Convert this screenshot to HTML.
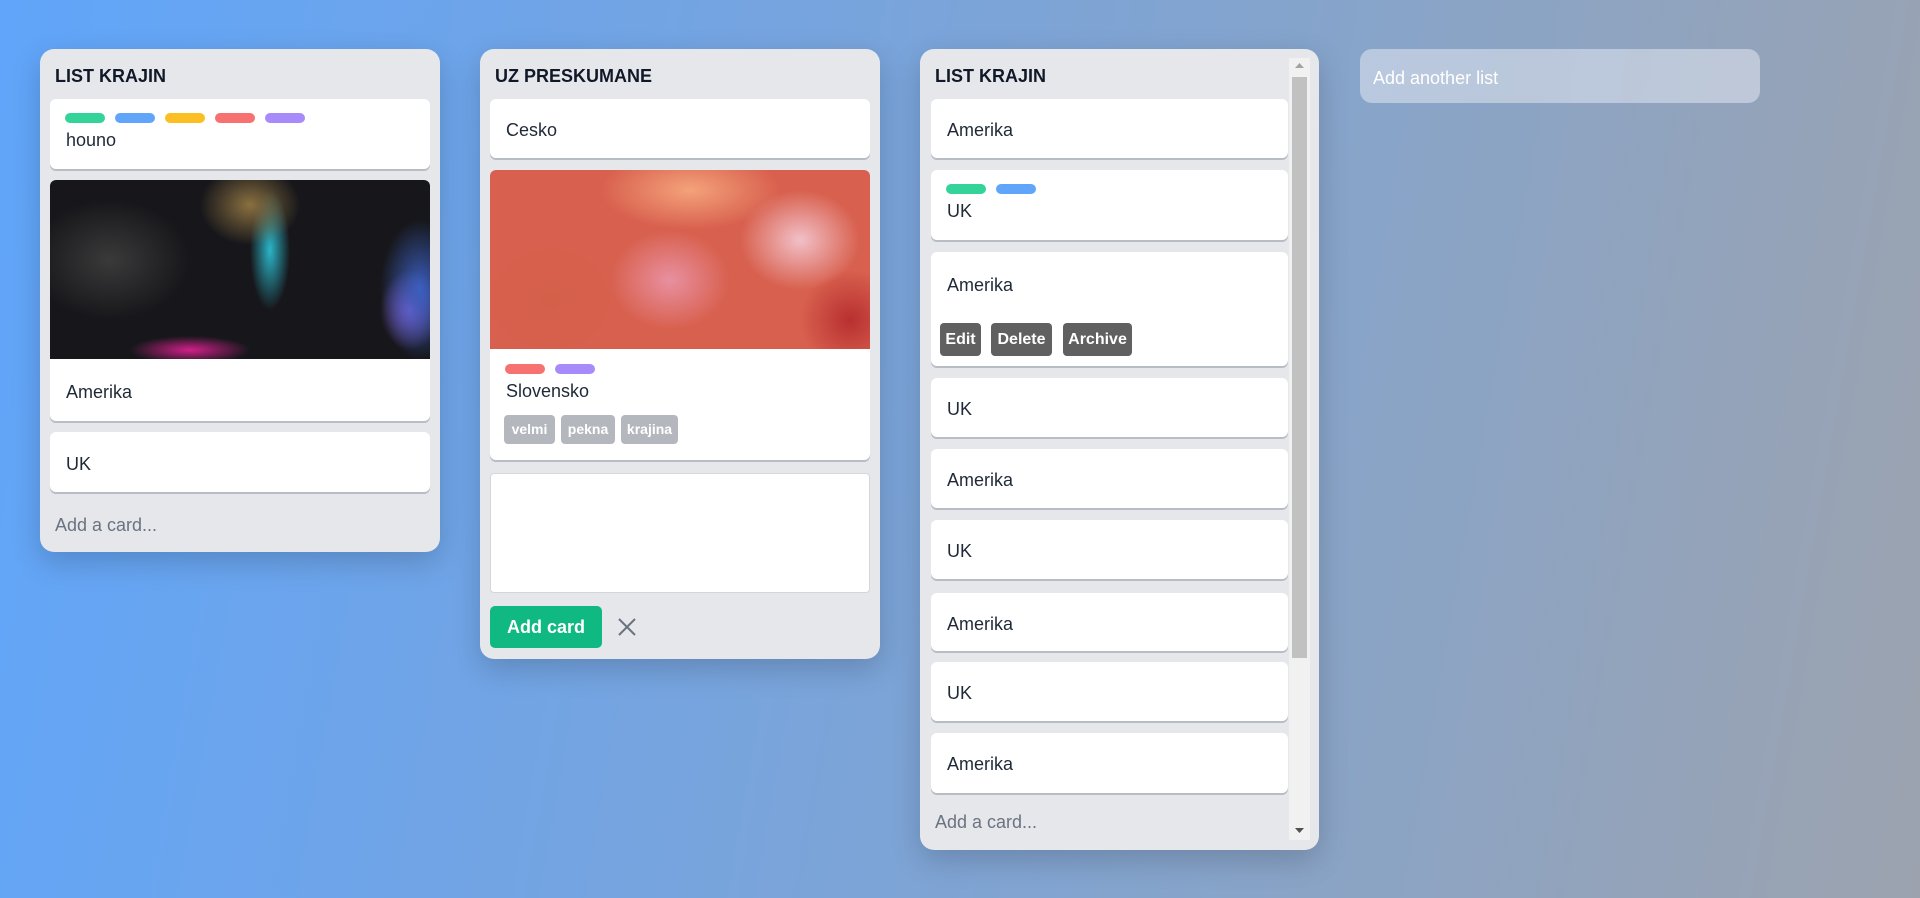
<!DOCTYPE html>
<html><head><meta charset="utf-8"><style>
*{box-sizing:border-box;margin:0;padding:0}
body{width:1920px;height:898px;overflow:hidden;position:relative;font-family:"Liberation Sans",sans-serif;background:linear-gradient(100deg,#60a5fa 0%,#7aa4da 45%,#9ca3af 100%);}
.list{position:absolute;background:#e5e7eb;border-radius:14px;box-shadow:0 10px 30px rgba(0,0,0,.18)}
.h{position:absolute;left:15px;top:17px;font-weight:bold;font-size:18px;color:#111827}
.card{position:absolute;background:#fff;border-radius:6px;box-shadow:0 2px 0 #b8bcc4;overflow:hidden}
.t{position:absolute;left:16px;font-size:18px;color:#1f2937;margin-top:1px}
.lb{position:absolute;height:10px;width:40px;border-radius:5px}
.add{position:absolute;left:15px;font-size:18px;color:#6b7280;margin-top:1px}
.tag{position:absolute;height:29px;background:#b4b8be;color:#fff;font-size:14px;font-weight:bold;border-radius:4px;text-align:center;line-height:29px}
.btn{position:absolute;height:33px;background:#606060;color:#fff;font-weight:bold;font-size:16px;border-radius:4px;text-align:center;line-height:33px}
</style></head><body>

<div class="list" style="left:40px;top:49px;width:400px;height:503px">
<div class="h">LIST KRAJIN</div>
<div class="card" style="left:10px;top:50px;width:380px;height:70px">
 <div class="lb" style="left:15px;top:14px;background:#34d399"></div>
 <div class="lb" style="left:65px;top:14px;background:#60a5fa"></div>
 <div class="lb" style="left:115px;top:14px;background:#fbbf24"></div>
 <div class="lb" style="left:165px;top:14px;background:#f87171"></div>
 <div class="lb" style="left:215px;top:14px;background:#a78bfa"></div>
 <div class="t" style="top:30px">houno</div>
</div>
<div class="card" style="left:10px;top:131px;width:380px;height:241px">
 <div style="position:absolute;left:0;top:0;width:380px;height:179px;background:
 radial-gradient(ellipse 40px 70px at 370px 110px,#3b5fc0 0%,transparent 100%),
 radial-gradient(ellipse 30px 40px at 360px 130px,#8a5cd0 0%,transparent 100%),
 radial-gradient(ellipse 60px 14px at 140px 170px,#d0208a 0%,transparent 100%),
 radial-gradient(ellipse 50px 40px at 200px 25px,#8a7040 0%,transparent 100%),
 radial-gradient(ellipse 20px 60px at 220px 70px,#2bb5c8 0%,transparent 100%),
 radial-gradient(ellipse 80px 60px at 60px 80px,#3a3a3a 0%,transparent 100%),
 #17171b"></div>
 <div class="t" style="top:201px">Amerika</div>
</div>
<div class="card" style="left:10px;top:383px;width:380px;height:60px"><div class="t" style="top:21px">UK</div></div>
<div class="add" style="top:465px">Add a card...</div>
</div>

<div class="list" style="left:480px;top:49px;width:400px;height:610px">
<div class="h">UZ PRESKUMANE</div>
<div class="card" style="left:10px;top:50px;width:380px;height:59px"><div class="t" style="top:20px">Cesko</div></div>
<div class="card" style="left:10px;top:121px;width:380px;height:290px">
 <div style="position:absolute;left:0;top:0;width:380px;height:179px;background:
 radial-gradient(ellipse 60px 50px at 310px 70px,#f2c0c8 0%,transparent 100%),
 radial-gradient(ellipse 90px 40px at 200px 20px,#f4a27a 0%,transparent 100%),
 radial-gradient(ellipse 60px 50px at 180px 110px,#e890a0 0%,transparent 100%),
 radial-gradient(ellipse 70px 60px at 60px 130px,#d4604a 0%,transparent 100%),
 radial-gradient(ellipse 50px 50px at 360px 150px,#b83030 0%,transparent 100%),
 #d8604e"></div>
 <div class="lb" style="left:15px;top:194px;background:#f87171"></div>
 <div class="lb" style="left:65px;top:194px;background:#a78bfa"></div>
 <div class="t" style="top:210px">Slovensko</div>
</div>
<div class="tag" style="left:24px;top:366px;width:51px">velmi</div>
<div class="tag" style="left:81px;top:366px;width:54px">pekna</div>
<div class="tag" style="left:141px;top:366px;width:57px">krajina</div>
<div style="position:absolute;left:10px;top:424px;width:380px;height:120px;background:#fff;border:1px solid #d4d6da;border-radius:4px"></div>
<div style="position:absolute;left:10px;top:557px;width:112px;height:42px;background:#10b981;border-radius:5px;color:#fff;font-weight:bold;font-size:18px;text-align:center;line-height:42px">Add card</div>
<svg style="position:absolute;left:137px;top:568px" width="20" height="20" viewBox="0 0 20 20"><path d="M2 2L18 18M18 2L2 18" stroke="#6b7280" stroke-width="2"/></svg>
</div>

<div class="list" style="left:920px;top:49px;width:399px;height:801px">
<div class="h">LIST KRAJIN</div>
<div style="position:absolute;left:369px;top:9px;width:21px;height:782px;background:#f1f1f1"></div>
<div style="position:absolute;left:372px;top:28px;width:15px;height:581px;background:#c1c1c1"></div>
<svg style="position:absolute;left:375px;top:14px" width="9" height="6"><path d="M0 5L4.5 0L9 5Z" fill="#a3a3a3"/></svg>
<svg style="position:absolute;left:375px;top:779px" width="9" height="6"><path d="M0 0L4.5 5L9 0Z" fill="#505050"/></svg>
<div class="card" style="left:11px;top:50px;width:357px;height:59px"><div class="t" style="top:20px">Amerika</div></div>
<div class="card" style="left:11px;top:121px;width:357px;height:70px">
 <div class="lb" style="left:15px;top:14px;background:#34d399"></div>
 <div class="lb" style="left:65px;top:14px;background:#60a5fa"></div>
 <div class="t" style="top:30px">UK</div></div>
<div class="card" style="left:11px;top:203px;width:357px;height:114px"><div class="t" style="top:22px">Amerika</div></div>
<div class="btn" style="left:20px;top:274px;width:41px">Edit</div>
<div class="btn" style="left:71px;top:274px;width:61px">Delete</div>
<div class="btn" style="left:143px;top:274px;width:69px">Archive</div>
<div class="card" style="left:11px;top:329px;width:357px;height:59px"><div class="t" style="top:20px">UK</div></div>
<div class="card" style="left:11px;top:400px;width:357px;height:59px"><div class="t" style="top:20px">Amerika</div></div>
<div class="card" style="left:11px;top:471px;width:357px;height:59px"><div class="t" style="top:20px">UK</div></div>
<div class="card" style="left:11px;top:544px;width:357px;height:58px"><div class="t" style="top:20px">Amerika</div></div>
<div class="card" style="left:11px;top:613px;width:357px;height:59px"><div class="t" style="top:20px">UK</div></div>
<div class="card" style="left:11px;top:684px;width:357px;height:60px"><div class="t" style="top:20px">Amerika</div></div>
<div class="add" style="top:762px">Add a card...</div>
</div>

<div style="position:absolute;left:1360px;top:49px;width:400px;height:54px;background:rgba(226,232,240,.55);border-radius:12px;color:#fff;font-size:18px;padding:19px 0 0 13px">Add another list</div>
</body></html>
